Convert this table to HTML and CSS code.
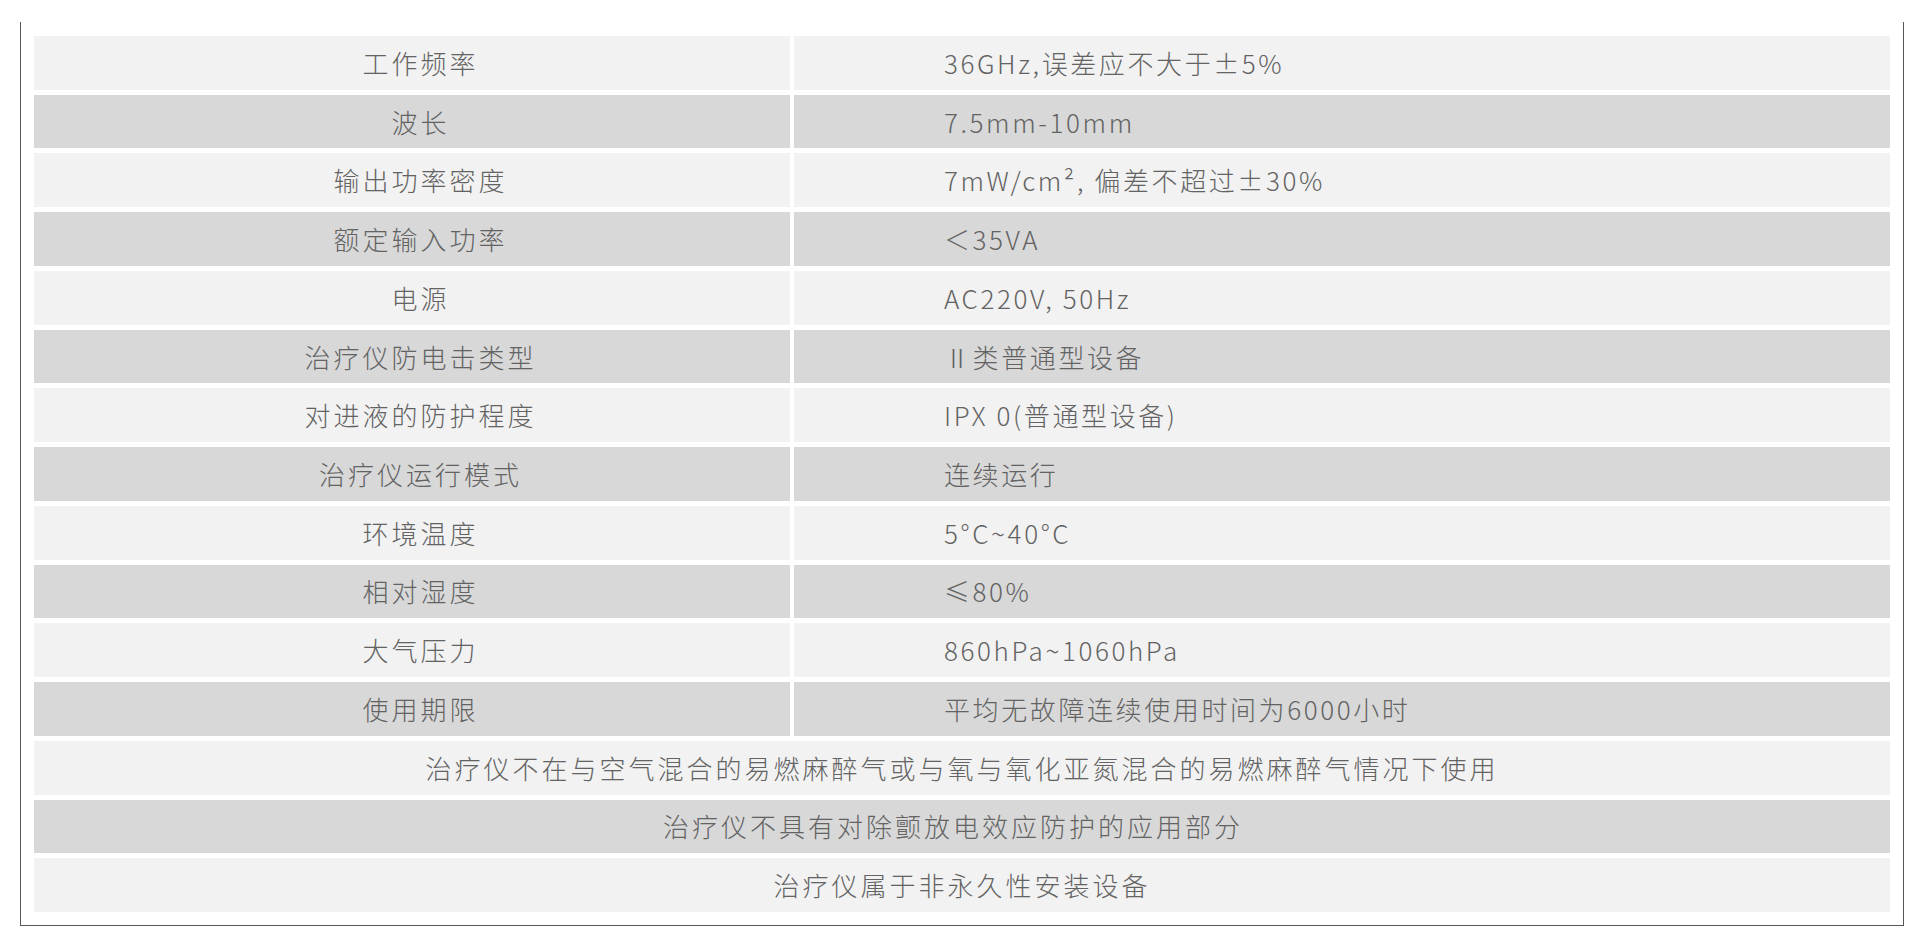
FILE: index.html
```html
<!DOCTYPE html>
<html lang="zh-CN">
<head>
<meta charset="utf-8">
<title>技术参数</title>
<link rel="stylesheet" href="styles.css">
</head>
<body>
<div class="frame">
  <div class="sheet">
    <div class="cell key light">工作频率</div><div class="cell val light">36GHz,误差应不大于±5%</div>
    <div class="cell key dark">波长</div><div class="cell val dark">7.5mm-10mm</div>
    <div class="cell key light">输出功率密度</div><div class="cell val light">7mW/cm², 偏差不超过±30%</div>
    <div class="cell key dark">额定输入功率</div><div class="cell val dark">＜35VA</div>
    <div class="cell key light">电源</div><div class="cell val light">AC220V, 50Hz</div>
    <div class="cell key dark">治疗仪防电击类型</div><div class="cell val dark">Ⅱ类普通型设备</div>
    <div class="cell key light">对进液的防护程度</div><div class="cell val light">IPX 0(普通型设备)</div>
    <div class="cell key dark">治疗仪运行模式</div><div class="cell val dark">连续运行</div>
    <div class="cell key light">环境温度</div><div class="cell val light">5°C~40°C</div>
    <div class="cell key dark">相对湿度</div><div class="cell val dark">≤80%</div>
    <div class="cell key light">大气压力</div><div class="cell val light">860hPa~1060hPa</div>
    <div class="cell key dark">使用期限</div><div class="cell val dark">平均无故障连续使用时间为6000小时</div>
    <div class="cell full light">治疗仪不在与空气混合的易燃麻醉气或与氧与氧化亚氮混合的易燃麻醉气情况下使用</div>
    <div class="cell full dark shifted">治疗仪不具有对除颤放电效应防护的应用部分</div>
    <div class="cell full light">治疗仪属于非永久性安装设备</div>
  </div>
</div>
</body>
</html>
```

FILE: styles.css
```css
html, body {
  margin: 0;
  padding: 0;
  background: #ffffff;
}

body {
  font-family: "Noto Sans CJK SC", "Noto Sans", sans-serif;
  font-weight: 300;
  color: #636363;
}

.frame {
  box-sizing: border-box;
  width: 1884px;
  margin: 22px 0 0 20px;
  padding: 14px 13px 13px 13px;
  border-left: 1px solid #555555;
  border-right: 1px solid #555555;
  border-bottom: 1px solid #555555;
}

.sheet {
  display: grid;
  grid-template-columns: 756px 1fr;
  grid-template-rows: repeat(15, 1fr);
  column-gap: 4px;
  row-gap: 5px;
  height: 876px;
}

.cell {
  display: flex;
  align-items: center;
  font-size: 26px;
  letter-spacing: 3px;
  line-height: 1;
  white-space: nowrap;
}

.light {
  background: #f2f2f2;
}

.dark {
  background: #d8d8d8;
}

.key {
  justify-content: center;
  padding-left: 17px;
}

.val {
  padding-left: 150px;
  letter-spacing: 2.6px;
}

.full {
  grid-column: 1 / -1;
  justify-content: center;
}

.shifted {
  padding-right: 18px;
}
```
